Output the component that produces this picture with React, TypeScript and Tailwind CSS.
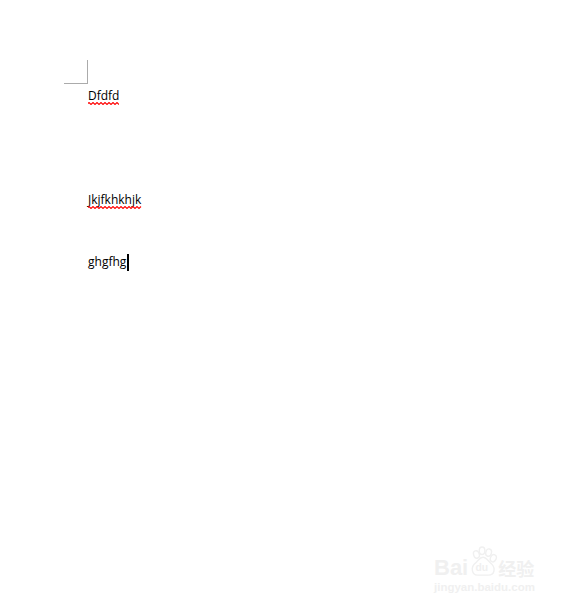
function Wave({ width }: { width: number }) {
  let d = "M0 1.5";
  for (let x = 0; x < width; x += 2) {
    d += ` L${x + 1} ${(x / 2) % 2 === 0 ? 0.5 : 2.5}`;
  }
  return (
    <svg width={width} height="3" viewBox={`0 0 ${width} 3`} className="absolute left-0 top-[16px]" fill="none" stroke="#f00" strokeWidth="1.1">
      <path d={d} />
    </svg>
  );
}

export default function App() {
  return (
    <div className="relative w-[566px] h-[607px] overflow-hidden bg-white text-black font-['Open_Sans','Noto_Sans',sans-serif]">
      <div className="pt-[60px] pl-[64px]">
        <div className="w-[24px] h-[24px] border-r border-b border-[#ababab]" />
      </div>
      <div className="pl-[88px] text-[12px] leading-[20px]">
        <div className="mt-[2px] h-[20px]">
          <span className="relative inline-block">Dfdfd<Wave width={31} /></span>
        </div>
        <div className="mt-[84px] h-[20px]">
          <span className="relative inline-block">Jkjfkhkhjk<Wave width={54} /></span>
        </div>
        <div className="mt-[42px] h-[20px] flex items-center">
          <span>ghgfhg</span>
          <span className="ml-[1px] w-[2px] h-[17px] bg-black" />
        </div>
      </div>
      <div className="absolute left-[434px] top-[545px] w-[104px] text-[#f0f0f0]">
        <div className="flex items-end h-[33px]">
          <span className="text-[22px] leading-[21px] font-bold font-['Liberation_Sans',sans-serif]">Bai</span>
          <svg width="30" height="33" viewBox="0 0 32 33" fill="none" stroke="#f0f0f0" strokeWidth="1.5">
            <ellipse cx="9" cy="9" rx="3" ry="4" transform="rotate(-20 9 9)" />
            <ellipse cx="15" cy="5" rx="3" ry="4" />
            <ellipse cx="22" cy="7" rx="3" ry="4" transform="rotate(15 22 7)" />
            <ellipse cx="27" cy="13" rx="3" ry="4" transform="rotate(25 27 13)" />
            <path d="M16 12c-4 0-5 4-9 7-4 4-3 12 3 12h12c6 0 8-7 3-12-3-2-5-7-9-7z" />
            <text x="8" y="27" fontSize="11" fontWeight="700" fill="#f0f0f0" stroke="none" fontFamily="'Liberation Sans',sans-serif">du</text>
          </svg>
          <span className="text-[18px] leading-[20px] font-bold whitespace-nowrap font-['Noto_Sans_CJK_SC',sans-serif]">经验</span>
        </div>
        <div className="mt-[3px] text-[11.5px] leading-[13px] font-bold font-['Liberation_Sans',sans-serif] whitespace-nowrap">jingyan.baidu.com</div>
      </div>
    </div>
  );
}
